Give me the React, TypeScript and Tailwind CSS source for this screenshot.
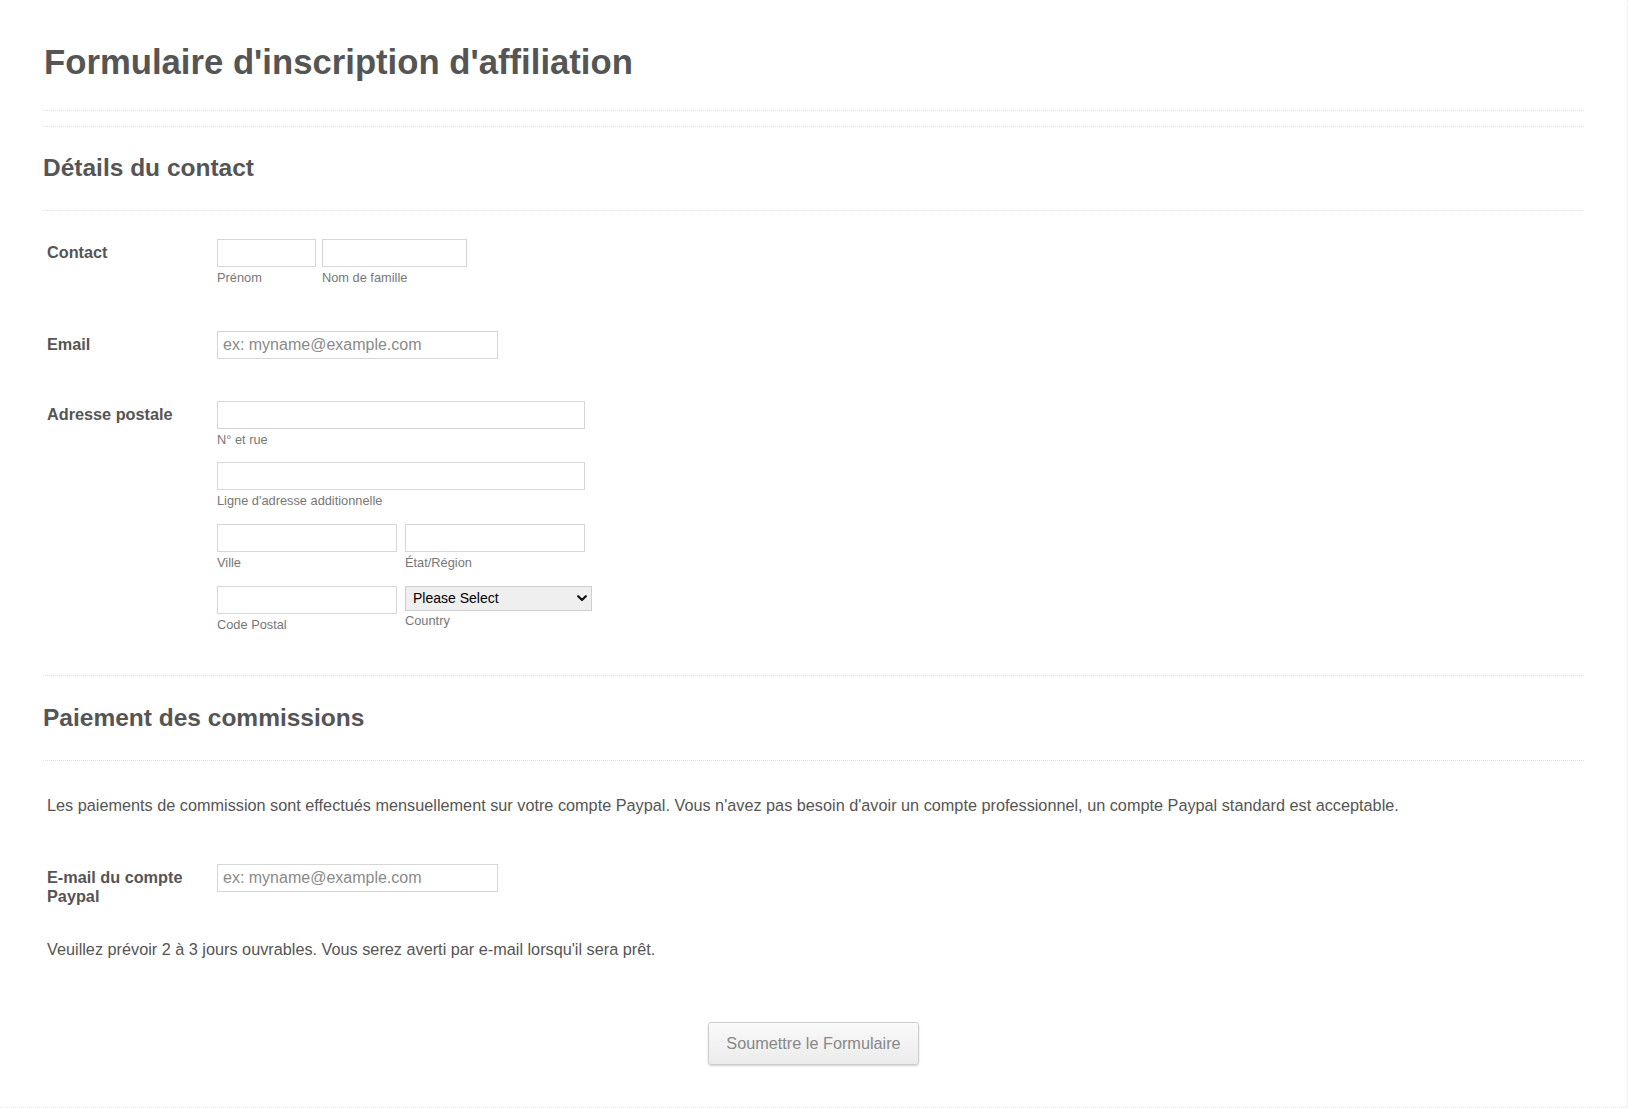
import { ReactNode } from "react"

function Field({ width, label }: { width: string; label: string }) {
  return (
    <div className="flex flex-col">
      <input type="text" className={`${width} h-[28px] border border-[#d6d6d6] bg-white px-[5px] text-[16px] outline-none`} />
      <span className="mt-[3px] text-[12.8px] leading-[16px] text-[#777]">{label}</span>
    </div>
  )
}

function Row({ label, children, className = "" }: { label: ReactNode; children: ReactNode; className?: string }) {
  return (
    <div className={`flex ${className}`}>
      <label className="w-[174px] shrink-0 pl-[4px] pr-4 pt-[4px] text-[16.25px] font-bold leading-[19px] text-[#555]">
        {label}
      </label>
      <div>{children}</div>
    </div>
  )
}

function EmailInput() {
  return (
    <input
      type="email"
      placeholder="ex: myname@example.com"
      className="h-[28px] w-[281px] border border-[#d6d6d6] bg-white px-[5px] text-[16px] text-[#555] outline-none placeholder:text-[#8a8a8a]"
    />
  )
}

export default function App() {
  return (
    <div className="min-h-[1108px] w-full border-r border-b border-dotted border-[#e8e8e8] bg-white font-['Liberation_Sans',Arial,sans-serif] text-[#555]">
      <div className="mx-[43px]">
        <div className="border-b border-dotted border-[#dedede] pt-[42px] pb-[28px]">
          <h1 className="pl-[1px] text-[34.7px] font-bold leading-[40px] text-[#555]">
            Formulaire d'inscription d'affiliation
          </h1>
        </div>

        <div className="mt-[15px] border-t border-dotted border-[#dedede]">
          <div className="border-b border-dotted border-[#dedede] pt-[27px] pb-[28px]">
            <h2 className="text-[24.5px] font-bold leading-[28px] text-[#555]">Détails du contact</h2>
          </div>

          <div className="pt-[28px] pb-[42px]">
            <Row label="Contact" className="pb-[45px]">
              <div className="flex gap-[6px]">
                <Field width="w-[99px]" label="Prénom" />
                <Field width="w-[145px]" label="Nom de famille" />
              </div>
            </Row>

            <Row label="Email" className="pb-[42px]">
              <EmailInput />
            </Row>

            <Row label="Adresse postale">
              <div className="flex flex-col">
                <Field width="w-[368px]" label="N° et rue" />
                <div className="mt-[14px]">
                  <Field width="w-[368px]" label="Ligne d'adresse additionnelle" />
                </div>
                <div className="mt-[15px] flex gap-[8px]">
                  <Field width="w-[180px]" label="Ville" />
                  <Field width="w-[180px]" label="État/Région" />
                </div>
                <div className="mt-[15px] flex items-start gap-[8px]">
                  <Field width="w-[180px]" label="Code Postal" />
                  <div className="flex flex-col">
                    <div className="relative h-[25px] w-[187px]">
                      <select className="h-full w-full appearance-none border border-[#cfcfcf] bg-[#efefef] pl-[7px] text-[14px] text-black outline-none">
                        <option>Please Select</option>
                      </select>
                      <svg
                        className="pointer-events-none absolute right-[5px] top-[9px]"
                        width="10"
                        height="7"
                        viewBox="0 0 10 7"
                        fill="none"
                      >
                        <path d="M1.2 1.2 5 5 8.8 1.2" stroke="#111" strokeWidth="2.2" strokeLinecap="round" strokeLinejoin="round" />
                      </svg>
                    </div>
                    <span className="mt-[2px] text-[12.8px] leading-[16px] text-[#777]">Country</span>
                  </div>
                </div>
              </div>
            </Row>
          </div>
        </div>

        <div className="border-t border-dotted border-[#dedede]">
          <div className="border-b border-dotted border-[#dedede] pt-[28px] pb-[28px]">
            <h2 className="text-[24.5px] font-bold leading-[28px] text-[#555]">Paiement des commissions</h2>
          </div>

          <p className="pt-[34px] pl-[4px] text-[16.25px] leading-[20px] text-[#555]">
            Les paiements de commission sont effectués mensuellement sur votre compte Paypal. Vous n'avez pas besoin
            d'avoir un compte professionnel, un compte Paypal standard est acceptable.
          </p>

          <Row label="E-mail du compte Paypal" className="mt-[49px]">
            <EmailInput />
          </Row>

          <p className="mt-[33px] pl-[4px] text-[16.25px] leading-[20px] text-[#555]">
            Veuillez prévoir 2 à 3 jours ouvrables. Vous serez averti par e-mail lorsqu'il sera prêt.
          </p>

          <div className="mt-[63px] flex justify-center">
            <button
              type="submit"
              className="h-[43px] w-[211px] rounded-[3px] border border-[#cdcdcd] bg-gradient-to-b from-[#fafafa] to-[#ebebeb] text-[16.25px] text-[#888] shadow-[0_1px_2px_rgba(0,0,0,0.18)]"
            >
              Soumettre le Formulaire
            </button>
          </div>
        </div>
      </div>
    </div>
  )
}
